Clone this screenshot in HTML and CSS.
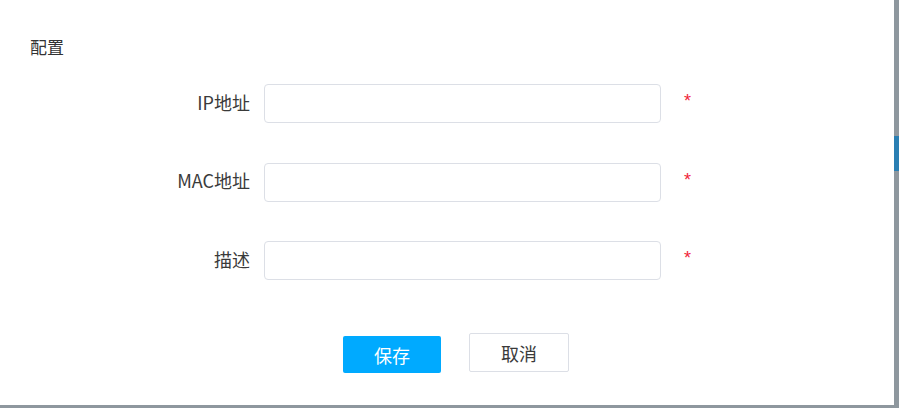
FILE: index.html
```html
<!DOCTYPE html>
<html lang="zh-CN">
<head>
<meta charset="utf-8">
<link rel="stylesheet" href="styles.css">
</head>
<body>
<div class="frame">
  <div class="panel">
    <div class="title">配置</div>
    <div class="form">
      <div class="row">
        <label class="label">IP地址</label>
        <div class="input"></div>
        <span class="req">*</span>
      </div>
      <div class="row">
        <label class="label">MAC地址</label>
        <div class="input"></div>
        <span class="req">*</span>
      </div>
      <div class="row">
        <label class="label">描述</label>
        <div class="input"></div>
        <span class="req">*</span>
      </div>
    </div>
    <div class="actions">
      <button class="btn btn-primary">保存</button>
      <button class="btn btn-default">取消</button>
    </div>
  </div>
  <div class="scroll"><div class="thumb"></div></div>
</div>
<div class="bottom"></div>
</body>
</html>
```

FILE: styles.css
```css
html, body {
  margin: 0;
  padding: 0;
  background: #ffffff;
}
body {
  width: 899px;
  height: 408px;
  overflow: hidden;
  font-family: "Noto Sans CJK SC", "Noto Sans", sans-serif;
  color: #333333;
}
.frame {
  display: flex;
  height: 405px;
}
.panel {
  width: 894px;
  background: #ffffff;
  box-sizing: border-box;
}
.scroll {
  width: 5px;
  background: #8e979e;
}
.thumb {
  margin-top: 136px;
  height: 35px;
  background: #2a7fb3;
}
.bottom {
  height: 3px;
  background: #8e979e;
}
.title {
  padding: 35px 0 0 30px;
  font-size: 17px;
  line-height: 24px;
  color: #333333;
}
.form {
  margin-top: 25px;
  display: flex;
  flex-direction: column;
  gap: 39.5px;
}
.row {
  display: flex;
  align-items: center;
  height: 39px;
}
.label {
  text-align: right;
  font-size: 18px;
  color: #3a3a3a;
  padding-right: 14px;
  padding-bottom: 4px;
  box-sizing: border-box;
  width: 264px;
}
.input {
  width: 397px;
  height: 39px;
  box-sizing: border-box;
  border: 1px solid #dcdfe6;
  border-radius: 4px;
  background: #fff;
}
.req {
  margin-left: 23px;
  color: #f01f3a;
  font-size: 18px;
  font-family: "Liberation Sans", sans-serif;
  position: relative;
  top: -2px;
}
.actions {
  display: flex;
  align-items: flex-start;
  gap: 28px;
  padding-left: 343px;
  margin-top: 53px;
}
.btn {
  font-family: "Noto Sans CJK SC", sans-serif;
  font-size: 18px;
  border-radius: 2px;
  box-sizing: border-box;
  padding: 0;
  cursor: pointer;
}
.btn-primary {
  width: 98px;
  height: 37px;
  margin-top: 3px;
  background: #00aaff;
  border: none;
  color: #ffffff;
}
.btn-default {
  width: 100px;
  height: 39px;
  background: #ffffff;
  border: 1px solid #dcdfe6;
  color: #3a3a3a;
}
```
